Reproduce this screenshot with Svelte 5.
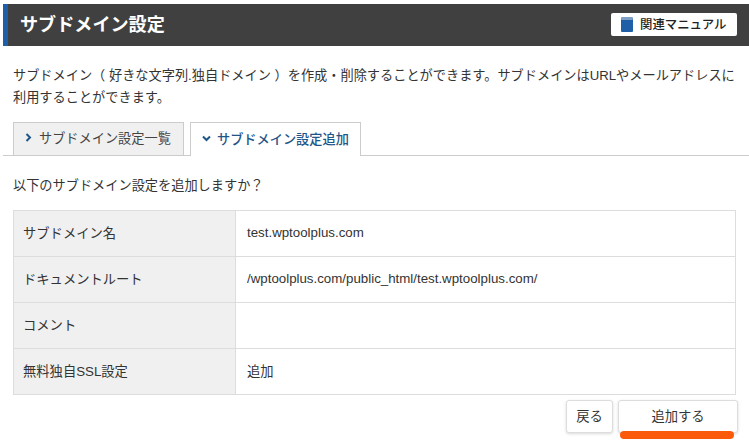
<script>
  const rows = [
    ['サブドメイン名', 'test.wptoolplus.com'],
    ['ドキュメントルート', '/wptoolplus.com/public_html/test.wptoolplus.com/'],
    ['コメント', ''],
    ['無料独自SSL設定', '追加']
  ];
</script>

<div class="page">
  <header class="head">
    <h1>サブドメイン設定</h1>
    <a class="manual">
      <svg width="12" height="15" viewBox="0 0 12 15"><rect x="0" y="1" width="12" height="14" rx="1" fill="#1f5fa8"/><rect x="0" y="0" width="12" height="3" rx="1" fill="#7f9fc4"/></svg>
      <span>関連マニュアル</span>
    </a>
  </header>

  <p class="desc">サブドメイン（ 好きな文字列.独自ドメイン ）を作成・削除することができます。サブドメインはURLやメールアドレスに利用することができます。</p>

  <nav class="tabs">
    <div class="tab">
      <svg width="7" height="9" viewBox="0 0 7 9"><path d="M1.5 1 L5 4.5 L1.5 8" fill="none" stroke="#1f5688" stroke-width="2"/></svg>
      <span>サブドメイン設定一覧</span>
    </div>
    <div class="tab active">
      <svg width="9" height="7" viewBox="0 0 9 7"><path d="M1 1.5 L4.5 5 L8 1.5" fill="none" stroke="#1f5688" stroke-width="2"/></svg>
      <span>サブドメイン設定追加</span>
    </div>
  </nav>

  <p class="confirm">以下のサブドメイン設定を追加しますか？</p>

  <div class="table">
    {#each rows as [k, v]}
      <div class="row">
        <div class="key"><span>{k}</span></div>
        <div class="val">{v}</div>
      </div>
    {/each}
  </div>

  <div class="actions">
    <button class="back">戻る</button>
    <button class="add">追加する</button>
  </div>
</div>

<style>
  :global(body) {
    margin: 0;
    background: #fff;
    overflow: hidden;
  }
  .page {
    width: 749px;
    height: 440px;
    padding-top: 4px;
    box-sizing: border-box;
    font-family: "Liberation Sans", "Noto Sans CJK JP", sans-serif;
    font-size: 13.3px;
    color: #333;
    overflow: hidden;
  }
  .head {
    margin-left: 3px;
    height: 42px;
    box-sizing: border-box;
    background: #404040;
    border-left: 5px solid #1f5fa8;
    padding: 0 12px;
    display: flex;
    align-items: center;
    justify-content: space-between;
  }
  h1 {
    margin: 0;
    font-size: 18.1px;
    font-weight: 700;
    color: #fff;
    line-height: 1;
  }
  .manual {
    width: 126px;
    height: 23px;
    background: #fff;
    border-radius: 2px;
    display: flex;
    align-items: center;
    gap: 7px;
    padding-left: 10px;
    box-sizing: border-box;
    font-size: 12.4px;
    font-weight: 500;
    color: #222;
    position: relative;
    top: -1px;
  }
  .desc {
    margin: 19px 0 0 13px;
    width: 724px;
    line-height: 21.5px;
    font-size: 13.2px;
  }
  .tabs {
    margin: 14px 0 0 3px;
    height: 34px;
    box-sizing: border-box;
    border-bottom: 1px solid #ccc;
    padding-left: 10px;
    display: flex;
    gap: 6px;
  }
  .tab {
    width: 171px;
    height: 33px;
    box-sizing: border-box;
    background: #f0f0f0;
    border: 1px solid #ccc;
    border-bottom: none;
    display: flex;
    align-items: center;
    gap: 7px;
    padding-left: 11px;
    padding-bottom: 3px;
    font-size: 13.2px;
    color: #444;
  }
  .tab.active {
    height: 34px;
    background: #fff;
    color: #1f5688;
    font-weight: 500;
    gap: 6px;
  }
  .confirm {
    margin: 20px 0 0 13px;
    line-height: 20px;
    font-size: 13.2px;
  }
  .table {
    margin: 14px 0 0 13px;
    width: 723px;
    box-sizing: border-box;
    border: 1px solid #ddd;
    border-bottom: none;
  }
  .row {
    height: 46px;
    box-sizing: border-box;
    border-bottom: 1px solid #ddd;
    display: flex;
    align-items: center;
  }
  .key {
    width: 222px;
    height: 100%;
    box-sizing: border-box;
    background: #f0f0f0;
    border-right: 1px solid #ddd;
    padding: 0 0 3px 9px;
    display: flex;
    align-items: center;
    flex: none;
  }
  .val {
    padding: 0 0 3px 11px;
    font-size: 13.3px;
  }
  .actions {
    margin: 5px 11px 0 0;
    display: flex;
    justify-content: flex-end;
    gap: 5px;
  }
  button {
    font: inherit;
    color: #333;
    height: 33px;
    background: #fff;
    border: 1px solid #ddd;
    border-radius: 3px;
    box-shadow: 0 1px 3px rgba(0,0,0,.15);
    padding: 0 0 3px;
    position: relative;
  }
  .back { width: 47px; }
  .add { width: 120px; }
  .add::after {
    content: "";
    position: absolute;
    left: 1px;
    right: 3px;
    bottom: -7px;
    height: 8px;
    border-radius: 4px;
    background: #fa5a0a;
  }
</style>
